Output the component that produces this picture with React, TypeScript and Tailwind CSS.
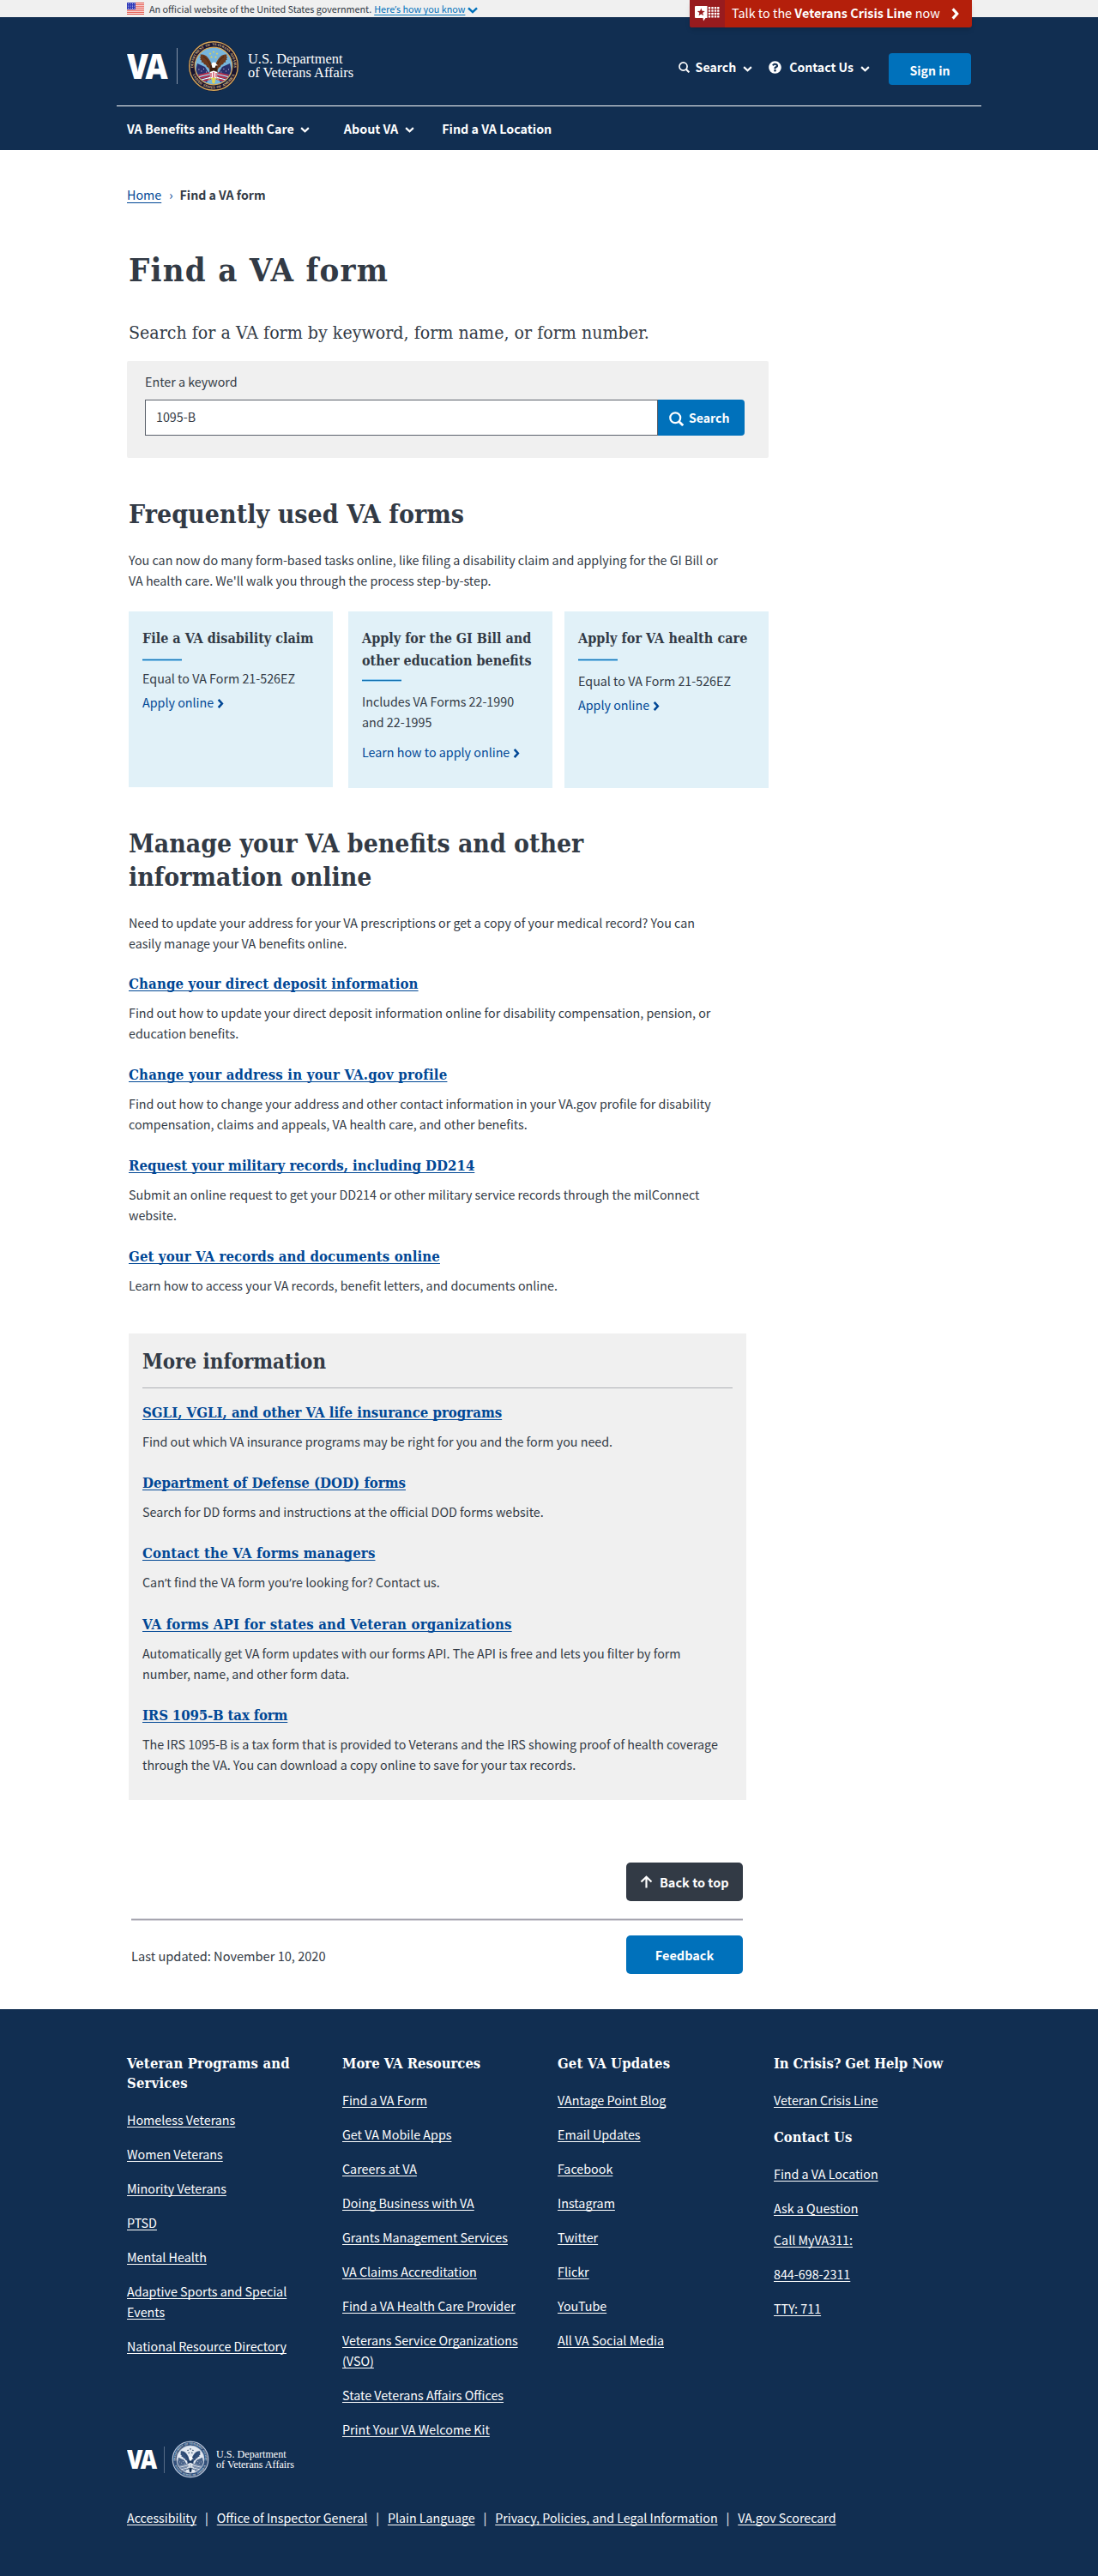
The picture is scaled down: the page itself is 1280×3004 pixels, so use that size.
import React, { useId } from "react";
import { FaQuestionCircle } from "react-icons/fa";

const SLAB = "font-['DejaVu_Serif_Condensed','DejaVu_Serif',serif] [font-stretch:condensed]";

function ChevronDown({ className }: { className: string }) {
  return (
    <svg viewBox="0 0 12 8" className={className} fill="none" stroke="currentColor" strokeWidth="2.5">
      <path d="M1 1.3 L6 6.1 L11 1.3" />
    </svg>
  );
}

function ChevronRight({ className }: { className: string }) {
  return (
    <svg viewBox="0 0 8 12" className={className} fill="none" stroke="currentColor" strokeWidth="2.8">
      <path d="M1.5 1 L6 6 L1.5 11" />
    </svg>
  );
}

function SearchIcon({ className }: { className: string }) {
  return (
    <svg viewBox="0 0 16 16" className={className} fill="none" stroke="currentColor" strokeWidth="2.1">
      <circle cx="6.8" cy="6.8" r="5.6" />
      <path d="M10.8 10.8 L15.2 15.2" strokeWidth="2.6" />
    </svg>
  );
}

function Flag() {
  return (
    <svg viewBox="0 0 20 14" className="h-[14px] w-[20px]">
      <rect width="20" height="14" fill="#fff" />
      {[0, 2.15, 4.3, 6.45, 8.6, 10.75, 12.9].map((y) => (
        <rect key={y} y={y} width="20" height="1.1" fill="#e0483c" />
      ))}
      <rect width="10" height="8" fill="#2b35b8" />
      {[1.5, 4, 6.5].map((y) =>
        [1.5, 4, 6.5, 8.8].map((x) => <circle key={`${x}-${y}`} cx={x} cy={y} r="0.55" fill="#fff" />)
      )}
    </svg>
  );
}

type SealColors = {
  ring: string; edge: string; field: string; eagle: string; eagleDark: string;
  flag: string; stripe: string; star: string; text: string;
};

const COLOR_SEAL: SealColors = {
  ring: "#171430", edge: "#d9ab5a", field: "#77b5dd", eagle: "#6b3a1e", eagleDark: "#3d2012",
  flag: "#2a2f6c", stripe: "#c8324a", star: "#e6d44f", text: "#e3c78e",
};

const MONO_SEAL: SealColors = {
  ring: "#33507a", edge: "#c3cedd", field: "#e4eaf2", eagle: "#33507a", eagleDark: "#1d3a62",
  flag: "#4a648a", stripe: "#8195b1", star: "#112e51", text: "#dbe3ed",
};

function Seal({ c, className }: { c: SealColors; className: string }) {
  const id = useId();
  return (
    <svg viewBox="0 0 60 60" className={className}>
      <defs>
        <path id={`${id}t`} d="M6.4 33 A23.8 23.8 0 1 1 53.6 33" />
        <path id={`${id}b`} d="M4 34.5 A26.4 26.4 0 0 0 56 34.5" />
        <clipPath id={`${id}c`}>
          <circle cx="30" cy="30" r="21" />
        </clipPath>
      </defs>
      <circle cx="30" cy="30" r="29.5" fill={c.ring} />
      <circle cx="30" cy="30" r="28.3" fill="none" stroke={c.edge} strokeWidth="1.4" />
      <circle cx="30" cy="30" r="21.8" fill={c.field} stroke={c.edge} strokeWidth="1.2" />
      <g fill={c.text} fontFamily="Liberation Serif, serif" fontWeight="700" fontSize="4">
        <text wordSpacing="1.2">
          <textPath href={`#${id}t`} startOffset="50%" textAnchor="middle">
            DEPARTMENT OF VETERANS AFFAIRS
          </textPath>
        </text>
        <text wordSpacing="1.2">
          <textPath href={`#${id}b`} startOffset="50%" textAnchor="middle">
            UNITED STATES OF AMERICA
          </textPath>
        </text>
      </g>
      <g clipPath={`url(#${id}c)`}>
        <path d="M11 27 L20 31 L26 41 L22 49 L13 44 L9 36 Z" fill={c.flag} />
        <path d="M49 27 L40 31 L34 41 L38 49 L47 44 L51 36 Z" fill={c.flag} />
        <path d="M12 41 L25 38 M14 44.5 L26 41.5 M17 47.5 L27 45 M48 41 L35 38 M46 44.5 L34 41.5 M43 47.5 L33 45" stroke={c.stripe} strokeWidth="1.7" />
        <path d="M12 42.8 L25 39.8 M15 46.2 L26 43.4 M48 42.8 L35 39.8 M45 46.2 L34 43.4" stroke="#fff" strokeWidth="1.1" />
        <path d="M12.5 34 h.8 M15.5 36 h.8 M18 33.5 h.8 M21 37 h.8 M47 34 h.8 M44 36 h.8 M41.5 33.5 h.8 M38.5 37 h.8" stroke="#fff" strokeWidth="1" />
      </g>
      <path d="M29 31 C25 20 20 15 14 17 C16 18 15 19 13.5 19.5 C15.5 20.5 15 22 14 22.5 C16.5 23 16.5 24.5 15.5 25.5 C18.5 25.5 19 27 18.5 28 C21 28 22 29.5 22 31 C24 31 25 33 26 37 L34 37 C35 33 36 31 38 31 C38 29.5 39 28 41.5 28 C41 27 41.5 25.5 44.5 25.5 C43.5 24.5 43.5 23 46 22.5 C45 22 44.5 20.5 46.5 19.5 C45 19 44 18 46 17 C40 15 35 20 31 31 Z" fill={c.eagle} />
      <path d="M27 29 L33 29 L35 38 L30 44 L25 38 Z" fill={c.eagleDark} />
      <path d="M18 19 C22 21 25 26 27 32 M42 19 C38 21 35 26 33 32" fill="none" stroke={c.eagleDark} strokeWidth="0.9" />
      <path d="M27.5 28 C28 24.8 32.5 24.8 33 27.5 L35.3 29.2 L32.5 29.6 L31.5 32 L28.5 32 Z" fill="#fff" />
      <path d="M25.5 37 L30 35.5 L34.5 37 L34 43 L30 46 L26 43 Z" fill="#fff" />
      <path d="M27 38 V43 M30 37 V45 M33 38 V43" stroke={c.stripe} strokeWidth="1.2" />
      <path d="M28 44 L32 44 L31 50 L29 50 Z M24 46 L28 44 M36 46 L32 44" fill={c.star} stroke={c.star} strokeWidth="0.8" />
      {[[26, 15.5], [30, 13.5], [34, 15.5], [27.5, 19.5], [32.5, 19.5]].map(([x, y]) => (
        <path
          key={`${x}-${y}`}
          transform={`translate(${x} ${y}) scale(1.5)`}
          d="M0 -1 L.25 -.3 L1 -.3 L.4 .15 L.6 .9 L0 .45 L-.6 .9 L-.4 .15 L-1 -.3 L-.25 -.3 Z"
          fill={c.star}
        />
      ))}
    </svg>
  );
}

function CrisisIcon() {
  return (
    <svg viewBox="0 0 29 18" className="h-[18px] w-[29px]">
      <path d="M1 0 H14.5 V14 H12.5 L10 17.5 L9.5 14 H1 Q0 14 0 13 V1 Q0 0 1 0 Z" fill="#fff" />
      <path d="M7.3 2.6 L8.5 5.7 L11.8 5.9 L9.2 8 L10.1 11.2 L7.3 9.4 L4.5 11.2 L5.4 8 L2.8 5.9 L6.1 5.7 Z" fill="#981b1e" />
      {[2.2, 5.6, 9, 12.4].map((y) =>
        [17, 20.5, 24, 27.3].map((x) => <rect key={`${x}-${y}`} x={x - 1.2} y={y - 1.2} width="2.4" height="2.4" rx="0.5" fill="#fff" />)
      )}
    </svg>
  );
}

function CardRule() {
  return <div className="h-[3px] w-[46px] border-y border-[#8dcaf0] bg-[#1471b0]" />;
}

function CardLink({ children, className }: { children: string; className: string }) {
  return (
    <a className={`flex items-center text-[#004795] ${className}`}>
      {children}
      <ChevronRight className="ml-[4px] mt-[2px] h-[11px] w-[8px]" />
    </a>
  );
}

// The CJK face sets the curly apostrophe full width, so it is taken from Open Sans.
function withApostrophes(text: string) {
  return text.split("’").map((part, i) => (
    <React.Fragment key={i}>
      {i > 0 && <span className="font-['Open_Sans',sans-serif]">’</span>}
      {part}
    </React.Fragment>
  ));
}

type Item = { title: string; lines: string[]; width?: string };

function LinkItem({ title, lines, width = "tracking-normal" }: Item) {
  return (
    <section>
      <h3 className={`${SLAB} ${width} text-[16.65px] font-bold leading-6 text-[#004795]`}>
        <a className="underline decoration-1 underline-offset-[2px] [text-decoration-skip-ink:none]">{title}</a>
      </h3>
      <p className="mt-[10px]">
        {lines.map((l) => (
          <span key={l} className="block">{withApostrophes(l)}</span>
        ))}
      </p>
    </section>
  );
}

const MANAGE: Item[] = [
  { title: "Change your direct deposit information", width: "tracking-[0.13px]", lines: ["Find out how to update your direct deposit information online for disability compensation, pension, or", "education benefits."] },
  { title: "Change your address in your VA.gov profile", width: "tracking-[0.2px]", lines: ["Find out how to change your address and other contact information in your VA.gov profile for disability", "compensation, claims and appeals, VA health care, and other benefits."] },
  { title: "Request your military records, including DD214", lines: ["Submit an online request to get your DD214 or other military service records through the milConnect", "website."] },
  { title: "Get your VA records and documents online", width: "tracking-[0.1px]", lines: ["Learn how to access your VA records, benefit letters, and documents online."] },
];

const MORE: Item[] = [
  { title: "SGLI, VGLI, and other VA life insurance programs", lines: ["Find out which VA insurance programs may be right for you and the form you need."] },
  { title: "Department of Defense (DOD) forms", lines: ["Search for DD forms and instructions at the official DOD forms website."] },
  { title: "Contact the VA forms managers", width: "tracking-[0.17px]", lines: ["Can’t find the VA form you’re looking for? Contact us."] },
  { title: "VA forms API for states and Veteran organizations", width: "tracking-[0.19px]", lines: ["Automatically get VA form updates with our forms API. The API is free and lets you filter by form", "number, name, and other form data."] },
  { title: "IRS 1095-B tax form", width: "tracking-[-0.15px]", lines: ["The IRS 1095-B is a tax form that is provided to Veterans and the IRS showing proof of health coverage", "through the VA. You can download a copy online to save for your tax records."] },
];

const PROGRAMS = ["Homeless Veterans", "Women Veterans", "Minority Veterans", "PTSD", "Mental Health", "Adaptive Sports and Special Events", "National Resource Directory"];
const RESOURCES = ["Find a VA Form", "Get VA Mobile Apps", "Careers at VA", "Doing Business with VA", "Grants Management Services", "VA Claims Accreditation", "Find a VA Health Care Provider", "Veterans Service Organizations (VSO)", "State Veterans Affairs Offices", "Print Your VA Welcome Kit"];
const UPDATES = ["VAntage Point Blog", "Email Updates", "Facebook", "Instagram", "Twitter", "Flickr", "YouTube", "All VA Social Media"];
const LEGAL = ["Accessibility", "Office of Inspector General", "Plain Language", "Privacy, Policies, and Legal Information", "VA.gov Scorecard"];

function FooterHeading({ children, className = "" }: { children: React.ReactNode; className?: string }) {
  return <h4 className={`${SLAB} ${className} text-[16.5px] font-bold leading-[22.5px]`}>{children}</h4>;
}

function FooterLinks({ items, className = "" }: { items: string[]; className?: string }) {
  return (
    <ul className={`flex flex-col gap-4 ${className}`}>
      {items.map((t) => (
        <li key={t}>
          <a className="underline decoration-1 underline-offset-[2px] [text-decoration-skip-ink:none]">{t}</a>
        </li>
      ))}
    </ul>
  );
}

export default function App() {
  return (
    <div className="min-h-[3004px] w-[1280px] overflow-hidden bg-white font-['Noto_Sans_CJK_SC',sans-serif] text-[14.3px] leading-6 whitespace-nowrap text-[#323a45]">
      <div className="relative flex h-5 items-center bg-[#f0f0f0] pl-[148px] text-[10.8px] leading-5">
        <Flag />
        <span className="ml-[6px]">An official website of the United States government.</span>
        <a className="ml-[3px] text-[#0071bb] underline decoration-1 underline-offset-[2px] [text-decoration-skip-ink:none]">
          {withApostrophes("Here’s how you know")}
        </a>
        <ChevronDown className="ml-[3px] mt-[3px] h-[8px] w-[12px] text-[#0071bb]" />
        <div className="absolute left-[804px] top-0 flex h-8 w-[329px] overflow-hidden rounded-b-[3px] bg-[#b41f0b] text-[14.4px] leading-8 text-white shadow-md">
          <div className="flex w-[41px] items-center justify-center bg-[#981b1e]">
            <CrisisIcon />
          </div>
          <span className="ml-2 -mt-px">
            Talk to the <b>Veterans Crisis Line</b> now
          </span>
          <ChevronRight className="ml-auto mr-[15px] mt-[9px] h-[14px] w-[9px]" />
        </div>
      </div>

      <header className="h-[155px] bg-[#112e51] text-white">
        <div className="mx-[136px] flex h-[104px] border-b border-white pl-3">
          <div className="box-content flex h-[62px] w-[300px] items-center pt-[26px]">
            <span className="w-[47px] origin-left scale-x-[0.89] font-['Open_Sans',sans-serif] text-[40.5px] font-extrabold leading-[40px] tracking-[-4px]">VA</span>
            <span className="ml-[11px] h-[42px] w-px bg-[#8594a9]" />
            <Seal c={COLOR_SEAL} className="ml-3 h-[60px] w-[60px]" />
            <span className="ml-[10px] block font-['Liberation_Serif',serif] text-[16.4px] leading-4">
              <span className="block">U.S. Department</span>
              <span className="block">of Veterans Affairs</span>
            </span>
          </div>
          <div className="ml-auto flex items-start pr-[12px] text-[14.1px] font-bold">
            <div className="mt-[46px] flex items-center">
              <SearchIcon className="h-[13px] w-[13px]" />
              <span className="ml-[7px]">Search</span>
              <ChevronDown className="ml-2 mt-[4px] h-[7px] w-[11px]" />
              <FaQuestionCircle className="ml-[19px] h-[15px] w-[15px]" />
              <span className="ml-[9px]">Contact Us</span>
              <ChevronDown className="ml-2 mt-[4px] h-[7px] w-[11px]" />
            </div>
            <button className="ml-[22px] mt-[42px] h-[37px] w-[96px] rounded bg-[#0071bb] pt-[2px] font-bold">Sign in</button>
          </div>
        </div>
        <nav className="flex h-[51px] items-center pl-[148px] text-[14.3px] font-bold">
          <span>VA Benefits and Health Care</span>
          <ChevronDown className="ml-[7px] mt-[4px] h-[7px] w-[11px]" />
          <span className="ml-[40px]">About VA</span>
          <ChevronDown className="ml-[8px] mt-[4px] h-[7px] w-[11px]" />
          <span className="ml-[32px]">Find a VA Location</span>
        </nav>
      </header>

      <main className="ml-[150px] w-[746px]">
        <div className="-ml-[2px] flex pt-10">
          <a className="text-[#004795] underline decoration-1 underline-offset-[3px]">Home</a>
          <span className="ml-[9px] text-[#004795]">›</span>
          <b className="ml-[8px] text-[14.15px]">Find a VA form</b>
        </div>
        <h1 className={`${SLAB} mb-[33px] mt-[52px] text-[38px] font-bold leading-[48px] tracking-[1.25px]`}>Find a VA form</h1>
        <p className={`${SLAB} text-[21.2px] leading-8`}>Search for a VA form by keyword, form name, or form number.</p>

        <form className="-ml-[2px] mt-[17px] h-[113px] rounded-[2px] bg-[#f0f0f0] px-[21px] pt-3">
          <label className="block">Enter a keyword</label>
          <div className="mt-[9px] flex">
            <div className="h-[42px] w-[598px] border border-[#5b616b] bg-white pl-3 leading-[38px]">1095-B</div>
            <button type="button" className="flex h-[42px] w-[101px] items-center rounded-r-[4px] bg-[#0071bb] pl-[13px] text-[14.1px] font-bold text-white">
              <SearchIcon className="mt-[2px] h-[17px] w-[17px]" />
              <span className="ml-[6px]">Search</span>
            </button>
          </div>
        </form>

        <h2 className={`${SLAB} mt-[46px] text-[30px] font-bold leading-10 tracking-[0.05px]`}>Frequently used VA forms</h2>
        <p className="mt-[21px]">
          You can now do many form-based tasks online, like filing a disability claim and applying for the GI Bill or<br />
          VA health care. We'll walk you through the process step-by-step.
        </p>

        <div className="mt-6 flex h-[206px]">
          <div className="h-[205px] w-[238px] bg-[#e1f1f8] pl-4 pt-[19px]">
            <h3 className={`${SLAB} mb-[10px] text-[16px] font-bold leading-[26px]`}>File a VA disability claim</h3>
            <CardRule />
            <p className="mt-2">Equal to VA Form 21-526EZ</p>
            <CardLink className="mt-[4px]">Apply online</CardLink>
          </div>
          <div className="ml-[18px] w-[238px] bg-[#e1f1f8] pl-4 pt-[19px]">
            <h3 className={`${SLAB} mb-[8px] text-[16px] font-bold leading-[26px]`}>Apply for the GI Bill and<br />other education benefits</h3>
            <CardRule />
            <p className="mt-[11px]">Includes VA Forms 22-1990<br />and 22-1995</p>
            <CardLink className="mt-[11px]">Learn how to apply online</CardLink>
          </div>
          <div className="ml-[14px] w-[238px] bg-[#e1f1f8] pl-4 pt-[19px]">
            <h3 className={`${SLAB} mb-[10px] text-[16px] font-bold leading-[26px] tracking-[0.06px]`}>Apply for VA health care</h3>
            <CardRule />
            <p className="mt-[11px]">Equal to VA Form 21-526EZ</p>
            <CardLink className="mt-[4px]">Apply online</CardLink>
          </div>
        </div>

        <h2 className={`${SLAB} mt-[45px] text-[29.9px] font-bold leading-[39px]`}>
          Manage your VA benefits and other<br />information online
        </h2>
        <p className="mt-[22px]">
          Need to update your address for your VA prescriptions or get a copy of your medical record? You can<br />
          easily manage your VA benefits online.
        </p>
        <div className="mt-[23px] flex flex-col gap-6">
          {MANAGE.map((i) => <LinkItem key={i.title} {...i} />)}
        </div>

        <aside className="mt-[44px] h-[544px] w-[720px] bg-[#f0f0f0] px-4 pt-[17px]">
          <h2 className={`${SLAB} border-b border-[#aeb0b5] pb-[14px] text-[23.9px] font-bold leading-8`}>More information</h2>
          <div className="mt-[16px] flex flex-col gap-6">
            {MORE.map((i) => <LinkItem key={i.title} {...i} />)}
          </div>
        </aside>

        <div className="ml-[3px] mt-[73px] w-[713px] pb-[41px] text-[14.5px]">
          <button className="ml-auto flex h-[45px] w-[136px] items-center rounded-[5px] bg-[#323a45] pl-4 font-bold text-white">
            <svg viewBox="0 0 16 16" className="h-[15px] w-[15px]" fill="none" stroke="currentColor" strokeWidth="2.3">
              <path d="M8 15.5 V2 M1.6 8 L8 1.8 L14.4 8" />
            </svg>
            <span className="ml-2">Back to top</span>
          </button>
          <div className="mt-5 h-[3px] border-y border-[#d4d3da] bg-[#a3a2ac]" />
          <div className="mt-[17px] flex h-[45px] items-center justify-between">
            <span className="pt-[2px] text-[14.6px]">Last updated: November 10, 2020</span>
            <button className="h-[45px] w-[136px] rounded-[5px] bg-[#0071bb] font-bold text-white">Feedback</button>
          </div>
        </div>
      </main>

      <footer className="h-[661px] bg-[#112e51] pl-[148px] pt-[53px] text-white">
        <div className="grid h-[450px] grid-cols-[251px_251px_252px_251px]">
          <div>
            <FooterHeading className="tracking-[0.2px]">Veteran Programs and<br />Services</FooterHeading>
            <FooterLinks items={PROGRAMS} className="mt-[19px] w-[200px] whitespace-normal" />
          </div>
          <div>
            <FooterHeading>More VA Resources</FooterHeading>
            <FooterLinks items={RESOURCES} className="mt-[18.5px] w-[212px] whitespace-normal" />
          </div>
          <div>
            <FooterHeading className="tracking-[0.15px]">Get VA Updates</FooterHeading>
            <FooterLinks items={UPDATES} className="mt-[18.5px]" />
          </div>
          <div>
            <FooterHeading className="tracking-[-0.1px]">In Crisis? Get Help Now</FooterHeading>
            <FooterLinks items={["Veteran Crisis Line"]} className="mb-[21px] mt-[18.5px]" />
            <FooterHeading>Contact Us</FooterHeading>
            <FooterLinks items={["Find a VA Location", "Ask a Question"]} className="mt-[18.5px]" />
            <FooterLinks items={["Call MyVA311:", "844-698-2311", "TTY: 711"]} className="mt-[13px]" />
          </div>
        </div>
        <div className="flex h-[44px] items-center">
          <span className="w-[35px] origin-left scale-x-[0.89] font-['Open_Sans',sans-serif] text-[30px] font-extrabold leading-[30px] tracking-[-3px]">VA</span>
          <span className="ml-[8px] h-[31px] w-px bg-[#576b86]" />
          <Seal c={MONO_SEAL} className="ml-[8px] h-[44px] w-[44px]" />
          <span className="ml-[8px] block font-['Liberation_Serif',serif] text-[12.1px] leading-3">
            <span className="block">U.S. Department</span>
            <span className="block">of Veterans Affairs</span>
          </span>
        </div>
        <div className="mt-[34px] flex text-[14.25px]">
          {LEGAL.map((t, i) => (
            <React.Fragment key={t}>
              {i > 0 && <span className="w-[23.6px] text-center">|</span>}
              <a className="underline decoration-1 underline-offset-[2px] [text-decoration-skip-ink:none]">{t}</a>
            </React.Fragment>
          ))}
        </div>
      </footer>
    </div>
  );
}
